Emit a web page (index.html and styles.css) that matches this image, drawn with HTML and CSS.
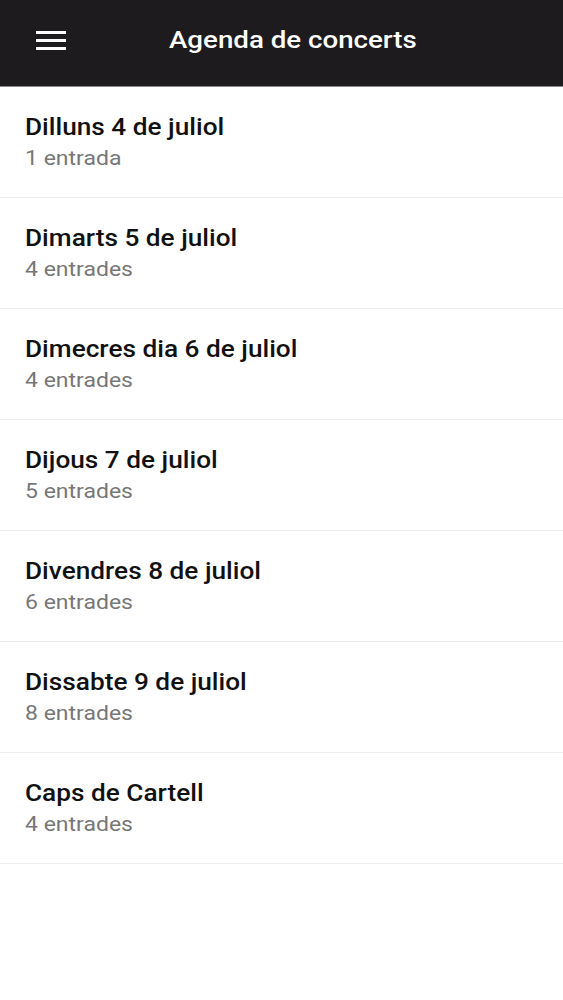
FILE: index.html
```html
<!DOCTYPE html>
<html lang="ca">
<head>
<meta charset="utf-8">
<title>Agenda de concerts</title>
<link rel="stylesheet" href="styles.css">
</head>
<body>
<header class="topbar">
  <button class="menu" aria-label="Menú">
    <svg width="30" height="19" viewBox="0 0 30 19"><rect x="0" y="0" width="30" height="3" fill="#fff"/><rect x="0" y="8" width="30" height="3" fill="#fff"/><rect x="0" y="16" width="30" height="3" fill="#fff"/></svg>
  </button>
  <h1 class="title"><span class="wide">Agenda de concerts</span></h1>
</header>
<ul class="list">
  <li class="item"><div class="name"><span class="wide">Dilluns 4 de juliol</span></div><div class="count"><span class="wide">1 entrada</span></div></li>
  <li class="item"><div class="name"><span class="wide">Dimarts 5 de juliol</span></div><div class="count"><span class="wide">4 entrades</span></div></li>
  <li class="item"><div class="name"><span class="wide">Dimecres dia 6 de juliol</span></div><div class="count"><span class="wide">4 entrades</span></div></li>
  <li class="item"><div class="name"><span class="wide">Dijous 7 de juliol</span></div><div class="count"><span class="wide">5 entrades</span></div></li>
  <li class="item"><div class="name"><span class="wide">Divendres 8 de juliol</span></div><div class="count"><span class="wide">6 entrades</span></div></li>
  <li class="item"><div class="name"><span class="wide">Dissabte 9 de juliol</span></div><div class="count"><span class="wide">8 entrades</span></div></li>
  <li class="item"><div class="name"><span class="wide">Caps de Cartell</span></div><div class="count"><span class="wide">4 entrades</span></div></li>
</ul>
</body>
</html>
```
FILE: styles.css
```css
html, body {
  margin: 0;
  padding: 0;
  background: #fff;
  font-family: Roboto, "Liberation Sans", sans-serif;
}
.wide {
  display: inline-block;
  transform: scaleX(1.14);
  transform-origin: left center;
  white-space: nowrap;
}
.topbar {
  height: 86px;
  background: #1d1b1e;
  border-bottom: 1px solid #8a8a8a;
  display: flex;
  align-items: center;
  padding-left: 36px;
}
.menu {
  border: 0;
  background: none;
  padding: 0;
  margin: 0;
  width: 30px;
  height: 19px;
  display: block;
  margin-top: -6px;
}
.menu svg { display: block; }
.title {
  margin: 0 0 0 103px;
  color: #fff;
  font-size: 24.5px;
  font-weight: 500;
  line-height: 30px;
  margin-top: -7px;
}
.title .wide { transform: scaleX(1.13); }
.list {
  list-style: none;
  margin: 0;
  padding: 0;
}
.item {
  height: 110px;
  border-bottom: 1px solid #ececec;
  padding: 0 25px;
  box-sizing: content-box;
  display: flex;
  flex-direction: column;
  justify-content: center;
}
.name {
  font-size: 23px;
  font-weight: 500;
  color: #111;
  line-height: 30px;
}
.count {
  font-size: 20px;
  color: #777;
  line-height: 28px;
  padding-top: 1px;
}
.count .wide { transform: scaleX(1.15); }
```
